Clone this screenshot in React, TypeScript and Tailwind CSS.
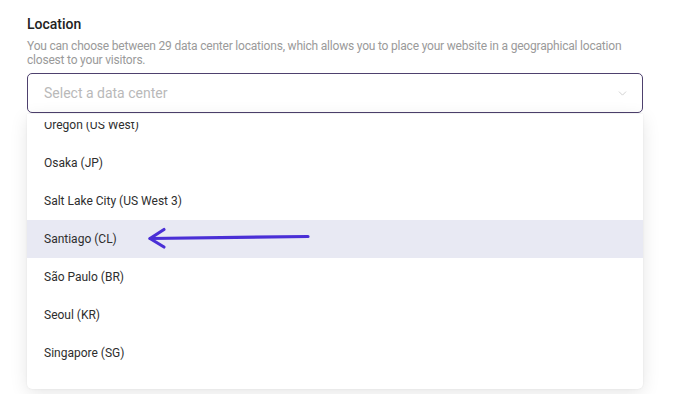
import { ChevronDown } from "lucide-react";

const locations = [
  "Oregon (US West)",
  "Osaka (JP)",
  "Salt Lake City (US West 3)",
  "Santiago (CL)",
  "São Paulo (BR)",
  "Seoul (KR)",
  "Singapore (SG)",
];

function PointerArrow() {
  return (
    <svg width="166" height="24" viewBox="0 0 166 24" className="shrink-0">
      <path d="M3 12.5 L161 10.5" stroke="#4a2fd6" strokeWidth="3.2" strokeLinecap="round" fill="none" />
      <path d="M17 3.5 L3 12.5 L17 21" stroke="#4a2fd6" strokeWidth="3.2" strokeLinecap="round" strokeLinejoin="round" fill="none" />
    </svg>
  );
}

export default function App() {
  return (
    <div className="w-[673px] h-[394px] bg-white overflow-hidden font-['Roboto',sans-serif]">
      <div className="pl-[27px] pr-[20px] pt-[15px]">
        {/* Label */}
        <h3 className="text-[14px] leading-[18px] font-medium text-[#222222]">Location</h3>
        <p className="mt-[6px] w-[620px] text-[12px] leading-[14px] tracking-[-0.2px] text-[#9a9a9a]">
          You can choose between 29 data center locations, which allows you to place your website in a geographical location closest to your visitors.
        </p>

        {/* Select */}
        <div className="mt-[6px] w-[616px] h-[40px] rounded-[5px] border border-[#4e416e] flex items-center justify-between pl-[16px] pr-[13px]">
          <span className="text-[14px] text-[#b9b9b9]">Select a data center</span>
          <ChevronDown className="w-[13px] h-[13px] text-[#c4c4c4]" strokeWidth={1.4} />
        </div>

        {/* Dropdown, scrolled part-way down the list */}
        <div className="w-[616px] h-[275px] mt-[1px] pt-[8px] bg-white rounded-b-[5px] shadow-[0_4px_18px_rgba(0,0,0,0.10),0_0_2px_rgba(0,0,0,0.08)]">
          <div className="h-[259px] overflow-hidden">
            <ul className="mt-[-16px]">
              {locations.map((loc) => (
                <li
                  key={loc}
                  className={`h-[38px] flex items-center pl-[17px] text-[12px] text-[#2e2e2e] ${
                    loc === "Santiago (CL)" ? "bg-[#e8e9f3]" : ""
                  }`}
                >
                  <span>{loc}</span>
                  {loc === "Santiago (CL)" && (
                    <span className="ml-[30px] mt-[-2px] flex">
                      <PointerArrow />
                    </span>
                  )}
                </li>
              ))}
            </ul>
          </div>
        </div>
      </div>
    </div>
  );
}
